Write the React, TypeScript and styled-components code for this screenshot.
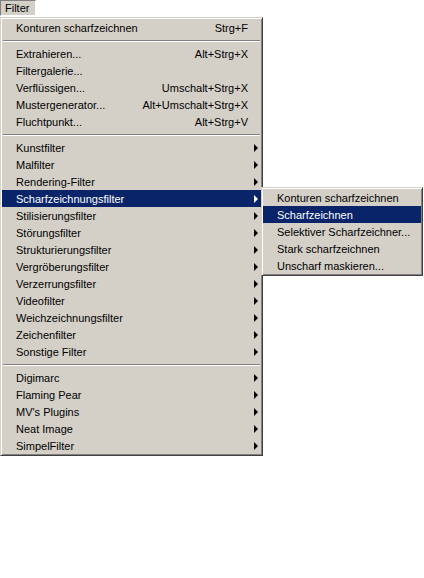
import styled, { createGlobalStyle } from 'styled-components'

type Entry = { label: string; shortcut?: string; sub?: boolean; active?: boolean }

const groups: Entry[][] = [
  [{ label: 'Konturen scharfzeichnen', shortcut: 'Strg+F' }],
  [
    { label: 'Extrahieren...', shortcut: 'Alt+Strg+X' },
    { label: 'Filtergalerie...' },
    { label: 'Verflüssigen...', shortcut: 'Umschalt+Strg+X' },
    { label: 'Mustergenerator...', shortcut: 'Alt+Umschalt+Strg+X' },
    { label: 'Fluchtpunkt...', shortcut: 'Alt+Strg+V' },
  ],
  [
    { label: 'Kunstfilter', sub: true },
    { label: 'Malfilter', sub: true },
    { label: 'Rendering-Filter', sub: true },
    { label: 'Scharfzeichnungsfilter', sub: true, active: true },
    { label: 'Stilisierungsfilter', sub: true },
    { label: 'Störungsfilter', sub: true },
    { label: 'Strukturierungsfilter', sub: true },
    { label: 'Vergröberungsfilter', sub: true },
    { label: 'Verzerrungsfilter', sub: true },
    { label: 'Videofilter', sub: true },
    { label: 'Weichzeichnungsfilter', sub: true },
    { label: 'Zeichenfilter', sub: true },
    { label: 'Sonstige Filter', sub: true },
  ],
  [
    { label: 'Digimarc', sub: true },
    { label: 'Flaming Pear', sub: true },
    { label: "MV's Plugins", sub: true },
    { label: 'Neat Image', sub: true },
    { label: 'SimpelFilter', sub: true },
  ],
]

const sharpen: Entry[] = [
  { label: 'Konturen scharfzeichnen' },
  { label: 'Scharfzeichnen', active: true },
  { label: 'Selektiver Scharfzeichner...' },
  { label: 'Stark scharfzeichnen' },
  { label: 'Unscharf maskieren...' },
]

export default function App() {
  return (
    <>
      <Global />
      <Page>
        <MenuBar>
          <BarButton>Filter</BarButton>
        </MenuBar>
        <Menu $width={263}>
          {groups.map((group, gi) => (
            <div key={gi}>
              {gi > 0 && <Separator />}
              {group.map((item) => (
                <Row key={item.label} $active={item.active}>
                  <Label>{item.label}</Label>
                  {item.shortcut && <Shortcut>{item.shortcut}</Shortcut>}
                  <ArrowCell>{item.sub && <Arrow $active={item.active} />}</ArrowCell>
                  {item.active && (
                    <Submenu>
                      <Menu $width={162}>
                        {sharpen.map((s) => (
                          <Row key={s.label} $active={s.active}>
                            <Label>{s.label}</Label>
                            <ArrowCell />
                          </Row>
                        ))}
                      </Menu>
                    </Submenu>
                  )}
                </Row>
              ))}
            </div>
          ))}
        </Menu>
      </Page>
    </>
  )
}

const Global = createGlobalStyle`
  body {
    margin: 0;
    background: #fff;
    font-family: "Liberation Sans", Arial, sans-serif;
    font-size: 11px;
    color: #000;
  }
`

const Page = styled.div`
  display: flex;
  flex-direction: column;
  align-items: flex-start;
  gap: 1px;
`

const MenuBar = styled.div`
  display: flex;
  height: 16px;
`

const BarButton = styled.div`
  box-sizing: border-box;
  width: 36px;
  height: 16px;
  padding: 1px 0 0 4px;
  background: #d4d0c8;
  border-top: 1px solid #808080;
  border-left: 1px solid #808080;
  border-right: 1px solid #fff;
  border-bottom: 1px solid #fff;
  line-height: 13px;
`

const Menu = styled.div<{ $width: number }>`
  box-sizing: border-box;
  width: ${(p) => p.$width}px;
  padding: 1px;
  background: #d4d0c8;
  border: 1px solid;
  border-color: #d4d0c8 #404040 #404040 #d4d0c8;
  box-shadow: inset 1px 1px #fff, inset -1px -1px #808080;
`

const Row = styled.div<{ $active?: boolean }>`
  position: relative;
  display: flex;
  align-items: center;
  height: 17px;
  padding-left: 14px;
  white-space: nowrap;
  background: ${(p) => (p.$active ? '#0a246a' : 'transparent')};
  color: ${(p) => (p.$active ? '#fff' : '#000')};
`

const Label = styled.span`
  flex: 1;
`

const Shortcut = styled.span`
  text-align: right;
`

const ArrowCell = styled.span`
  display: flex;
  align-items: center;
  width: 13px;
  height: 100%;
  padding-left: 6px;
  box-sizing: border-box;
`

const Arrow = styled.span<{ $active?: boolean }>`
  width: 0;
  height: 0;
  border-top: 4px solid transparent;
  border-bottom: 4px solid transparent;
  border-left: 4px solid ${(p) => (p.$active ? '#fff' : '#000')};
`

const Separator = styled.div`
  height: 9px;
  display: flex;
  flex-direction: column;
  justify-content: center;
  padding: 0 1px;
  &::before {
    content: '';
    display: block;
    height: 1px;
    background: #808080;
    border-bottom: 1px solid #fff;
  }
`

const Submenu = styled.div`
  position: absolute;
  left: 100%;
  top: -3px;
  z-index: 2;
  color: #000;
`
